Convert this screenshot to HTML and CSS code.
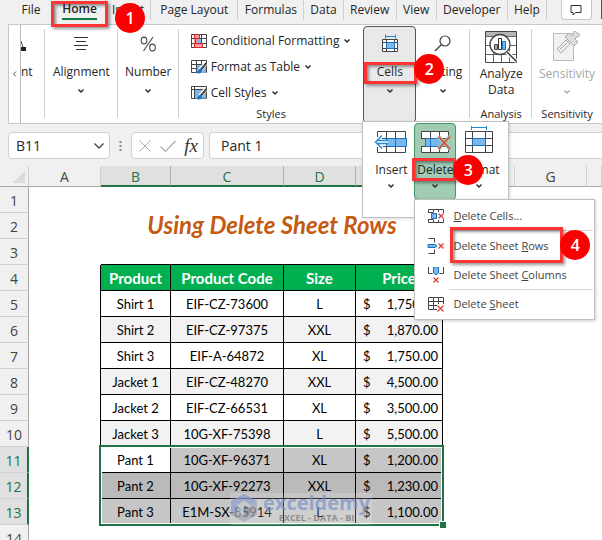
FILE: index.html
```html
<!DOCTYPE html>
<html lang="en">
<head>
  <meta charset="UTF-8" />
  <meta name="viewport" content="width=device-width, initial-scale=1.0" />
  <title>Using Delete Sheet Rows</title>
  <link rel="stylesheet" href="styles.css">
</head>
<body>
  <!-- shared chevron -->
  <svg class="defs" width="0" height="0">
    <symbol id="chev" viewBox="0 0 8 8"><path d="M1.5 2.5 4 5 6.5 2.5" fill="none" stroke="currentColor" stroke-width="1.4"/></symbol>
  </svg>

  <nav class="tabs">
    <button class="tab">File</button>
    <button class="tab active"><span>Home</span><i class="mark mark-home"></i><b class="badge badge-1">1</b></button>
    <button class="tab">Insert</button>
    <button class="tab">Page Layout</button>
    <button class="tab">Formulas</button>
    <button class="tab">Data</button>
    <button class="tab">Review</button>
    <button class="tab">View</button>
    <button class="tab">Developer</button>
    <button class="tab">Help</button>
    <div class="tab-end">
      <button class="comment" aria-label="Comments">
        <svg width="14" height="12" viewBox="0 0 14 12"><path d="M2 1.5h10v7H6.5L4 11V8.500H2z" fill="none" stroke="#333"/></svg>
      </button>
      <button class="share" aria-label="Share"></button>
    </div>
  </nav>

  <div class="ribbon">
    <button class="scroll" aria-label="Scroll left">
      <svg width="6" height="8" viewBox="0 0 6 8"><path d="M4 1.500 1.500 4 4 6.500" fill="none" stroke="#555"/></svg>
    </button>

    <div class="group cut">
      <svg class="icon" width="24" height="24" viewBox="0 0 24 24"><path d="M0 9l2 6" stroke="#444"/><path d="M0 15h5v4H0z" fill="#222"/></svg>
      <span class="label">nt</span>
    </div>

    <button class="group">
      <svg class="icon" width="24" height="24" viewBox="0 0 24 24"><path d="M5 5.500h14M7 9.500h10M5 13.500h14M7 17.500h10" stroke="#333"/></svg>
      <span class="label">Alignment</span>
      <svg class="chev"><use href="#chev"/></svg>
    </button>

    <button class="group">
      <svg class="icon" width="24" height="24" viewBox="0 0 24 24"><g fill="none" stroke="#444" stroke-width="1.100"><ellipse cx="8" cy="8.500" rx="2.800" ry="3.400"/><ellipse cx="16.500" cy="15.500" rx="2.800" ry="3.400"/><path d="M17 5 7.500 19"/></g></svg>
      <span class="label">Number</span>
      <svg class="chev"><use href="#chev"/></svg>
    </button>

    <div class="group styles">
      <button class="style-item">
        <svg width="16" height="14" viewBox="0 0 16 14"><path d="M.5.5h15v13H.5zM.5 4.500h15M.5 9.500h15M4.500.5v13M10.500.5v13" fill="#fff" stroke="#444"/><path d="M3.500.5h5v4h-5zM3.500 9.500h8v4h-8z" fill="#ff9c9c" stroke="#e02020"/><path d="M3.500 4.500h2v5h-2z" fill="#e02020"/><path d="M6 5h4v4H6z" fill="#7ab8ec"/></svg>
        Conditional Formatting <svg class="chev"><use href="#chev"/></svg>
      </button>
      <button class="style-item">
        <svg width="16" height="14" viewBox="0 0 16 14"><path d="M.5.5h15v12H.5zM.5 4.500h15M.5 8.500h15M5.500.5v12M10.500.5v12" fill="#fff" stroke="#444"/><path d="M6 5h9v8H6z" fill="#7ab8ec"/><path d="M15 3 9 10" stroke="#fff" stroke-width="4"/><path d="M15.500 3 10 9.500" stroke="#444" stroke-width="2"/><path d="M9.500 8.500c-2 .5-2 3-4.500 4 2.500 2 6 1 6-2z" fill="#1e72bd"/></svg>
        Format as Table <svg class="chev"><use href="#chev"/></svg>
      </button>
      <button class="style-item">
        <svg width="16" height="14" viewBox="0 0 16 14"><path d="M.5.5h15v12H.5zM.5 3.500h15M3.500.5v12" fill="#fff" stroke="#444"/><path d="M4 4h11v8.500H4z" fill="#7ab8ec"/><path d="M15 3 9 10" stroke="#fff" stroke-width="4"/><path d="M15.500 3 10 9.500" stroke="#444" stroke-width="2"/><path d="M9.500 8.500c-2 .5-2 3-4.500 4 2.500 2 6 1 6-2z" fill="#1e72bd"/></svg>
        Cell Styles <svg class="chev"><use href="#chev"/></svg>
      </button>
      <span class="caption">Styles</span>
    </div>

    <div class="group-wrap">
      <button class="group open">
        <svg class="icon" width="24" height="24" viewBox="0 0 24 24"><path d="M4.500 7.500h15v12h-15zM4.500 10.500h15M4.500 16.500h15M8.500 7.500v12M16.500 7.500v12" fill="#fff" stroke="#444"/><path d="M8.500 10.500h8v6h-8z" fill="#7ab8ec" stroke="#1e72bd"/><path d="M8 4.500h9M7.500 2.500v4M17.500 2.500v4" stroke="#1e8ad6"/></svg>
        <span class="label">Cells</span>
        <svg class="chev"><use href="#chev"/></svg>
        <i class="mark mark-cells"></i><b class="badge badge-2">2</b>
      </button>

      <div class="popup">
        <button class="cmd">
          <svg width="34" height="30" viewBox="0 0 34 30"><path d="M3.500 5.500h28v21h-28zM3.500 12.500h28M3.500 20.500h28M12.500 5.500v21M21.500 5.500v21" fill="#fff" stroke="#444"/><path d="M12.500 12.500h20v8h-20z" fill="#7ab8ec" stroke="#1e72bd"/><path d="M21.500 12.500v8" stroke="#1e72bd"/><path d="M8 9.500 1.500 16 8 22.500M1.500 16H14" fill="none" stroke="#fff" stroke-width="4"/><path d="M8 9.500 1.500 16 8 22.500M3 14.500h11M3 17.500h11" fill="none" stroke="#1e8ad6" stroke-width="1.400"/></svg>
          <span>Insert</span>
          <svg class="chev"><use href="#chev"/></svg>
        </button>
        <button class="cmd on">
          <svg width="34" height="30" viewBox="0 0 34 30"><path d="M3.500 5.500h27v21h-27zM3.500 12.500h27M3.500 20.500h27M12.500 5.500v21M21.500 5.500v21" fill="#fff" stroke="#444"/><path d="M1 13h6v7H1zM26 13h6v7h-6z" fill="#9fccb3"/><path d="M7.500 12.500h14l4 4-4 4h-14z" fill="#7ab8ec" stroke="#1e72bd"/><path d="M12.500 12.500v8" stroke="#1e72bd"/><path d="M20.500 10.500 32 23M32 10.500 20.500 23" stroke="#9fccb3" stroke-width="4"/><path d="M20.500 10.500 32 23M32 10.500 20.500 23" stroke="#e04434" stroke-width="1.600"/></svg>
          <span>Delete</span>
          <svg class="chev"><use href="#chev"/></svg>
          <i class="mark mark-delete"></i><b class="badge badge-3">3</b>
        </button>
        <button class="cmd">
          <svg width="34" height="30" viewBox="0 0 34 30"><path d="M3.500 5.500h27v21h-27zM3.500 12.500h27M3.500 19.500h27M10.500 5.500v21M23.500 5.500v21" fill="#fff" stroke="#444"/><path d="M10.500 12.500h13v7h-13z" fill="#7ab8ec" stroke="#1e72bd"/><path d="M9.500 1.500h15M9.500 0v4M24.500 0v4" stroke="#1e8ad6"/></svg>
          <span>Format</span>
          <svg class="chev"><use href="#chev"/></svg>
        </button>

        <div class="menu">
          <button class="menu-item">
            <svg width="18" height="16" viewBox="0 0 18 16"><path d="M1.500 5V1.500h15V5M6.500 1.500V4M11.500 1.500V4M1.500 11v3.500h15V11M6.500 14.500V12M11.500 14.500V12M1.500 4.500h5M1.500 11.500h5" fill="none" stroke="#444"/><path d="M4.500 5.500h5v5h-5z" fill="#7ab8ec" stroke="#1e72bd"/><path d="m11.500 5.500 5 5m0-5-5 5" stroke="#e04434" stroke-width="1.400"/></svg>
            <span><u>D</u>elete Cells...</span>
          </button>
          <button class="menu-item rows">
            <svg width="18" height="16" viewBox="0 0 18 16"><path d="M1.500.5h6v4M1.500 15.500h6v-4" fill="none" stroke="#444"/><path d="M1 6.500h7l2 1.500-2 1.500H1z" fill="#7ab8ec" stroke="#1e72bd"/><path d="m11.500 5.500 5 5m0-5-5 5" stroke="#e04434" stroke-width="1.400"/></svg>
            <span>Delete Sheet <u>R</u>ows</span>
            <i class="mark mark-rows"></i><b class="badge badge-4">4</b>
          </button>
          <button class="menu-item columns">
            <svg width="18" height="16" viewBox="0 0 18 16"><path d="M1.500 0v6.500h4M16.500 0v6.500h-4" fill="none" stroke="#444"/><path d="M6.500 0v6L9 8l2.500-2V0z" fill="#7ab8ec" stroke="#1e72bd"/><path d="m6.500 10.500 5 5m0-5-5 5" stroke="#e04434" stroke-width="1.400"/></svg>
            <span>Delete Sheet <u>C</u>olumns</span>
          </button>
          <button class="menu-item last">
            <svg width="18" height="16" viewBox="0 0 18 16"><path d="M10 13.500H1.500V1.500h15V8M1.500 5.500h15M1.500 9.500H10M6.500 1.500v12M11.500 1.500V8" fill="none" stroke="#444"/><path d="m10.500 9.500 6 6m0-6-6 6" stroke="#e04434" stroke-width="1.400"/></svg>
            <span>Delete <u>S</u>heet</span>
          </button>
        </div>
      </div>
    </div>

    <button class="group">
      <svg class="icon" width="24" height="24" viewBox="0 0 24 24"><circle cx="14" cy="9" r="5" fill="none" stroke="#444" stroke-width="1.200"/><path d="M10.500 12.500 4 19" stroke="#444" stroke-width="1.400"/></svg>
      <span class="label">Editing</span>
      <svg class="chev"><use href="#chev"/></svg>
    </button>

    <button class="group big">
      <svg width="32" height="32" viewBox="0 0 32 32"><path d="M.5.5h31v31H.5z" fill="#fff" stroke="#444"/><path d="M1 1h30v4H1z" fill="#b5b5b5"/><path d="M.5 5.500h31M.5 14.500h31M.5 23.500h31M8.500 14v17M16.500 5v26M24.500 14v17" stroke="#666"/><circle cx="15" cy="13.500" r="10" fill="#fff" stroke="#444" stroke-width="1.300"/><path d="M9.500 13.500h3v5h-3z" fill="#aaa" stroke="#444"/><path d="M13.500 7.500h3v11h-3z" fill="#fff" stroke="#333"/><path d="M17.500 10.500h3v8h-3z" fill="#7ab8ec" stroke="#1e72bd"/><path d="m22 21 9.500 9.500" stroke="#fff" stroke-width="4"/><path d="m22 21 9.500 9.500" stroke="#333" stroke-width="1.500"/></svg>
      <span class="label">Analyze<br>Data</span>
      <span class="caption">Analysis</span>
    </button>

    <button class="group big disabled" disabled>
      <svg width="32" height="32" viewBox="0 0 32 32"><path d="M2.500 2.500h20v27h-20z" fill="#f1f1f1" stroke="#bbb"/><path d="m6 18 9-9 4 4-9 9z" fill="#eee" stroke="#aaa"/><path d="m9 18 7-6" stroke="#aaa"/><path d="m14 6 4-4 3 3c2-1 0-4 3-5l5 4c-1 3-5 1-5 4l3 3-4 4z" fill="#ddd" stroke="#aaa"/></svg>
      <span class="label">Sensitivity</span>
      <svg class="chev"><use href="#chev"/></svg>
      <span class="caption">Sensitivity</span>
    </button>
  </div>

  <div class="formula-bar">
    <button class="name-box" aria-label="Name box">B11
      <svg width="12" height="8" viewBox="0 0 12 8"><path d="m1.500 1.500 4.500 4.500 4.500-4.500" fill="none" stroke="#444" stroke-width="1.300"/></svg>
    </button>
    <svg class="dots" width="3" height="12" viewBox="0 0 3 12"><path d="M.5 1h2v2h-2zM.5 5h2v2h-2zM.5 9h2v2h-2z" fill="#888"/></svg>
    <div class="fx-box">
      <button aria-label="Cancel"><svg width="14" height="14" viewBox="0 0 14 14"><path d="m1.500 1.500 11 11m0-11-11 11" stroke="#aaa"/></svg></button>
      <button aria-label="Enter"><svg width="18" height="14" viewBox="0 0 18 14"><path d="m1.500 7.500 5 5 10-10.500" fill="none" stroke="#aaa" stroke-width="1.200"/></svg></button>
      <button class="fx">fx</button>
    </div>
    <input class="formula" type="text" value="Pant 1" aria-label="Formula">
  </div>

  <main class="sheet">
    <table>
      <colgroup><col class="c-head"><col class="c-std"><col class="c-b"><col class="c-c"><col class="c-std"><col class="c-e"><col class="c-std"><col class="c-std"><col></colgroup>
      <thead>
        <tr><th class="corner"></th><th>A</th><th class="sel">B</th><th class="sel">C</th><th class="sel">D</th><th class="sel">E</th><th>F</th><th>G</th><th></th></tr>
      </thead>
      <tbody id="rows"></tbody>
    </table>
  </main>

  <script>
    const products = [
      ["Shirt 1", "EIF-CZ-73600", "L", "1,750.00"],
      ["Shirt 2", "EIF-CZ-97375", "XXL", "1,870.00"],
      ["Shirt 3", "EIF-A-64872", "XL", "1,750.00"],
      ["Jacket 1", "EIF-CZ-48270", "XXL", "4,500.00"],
      ["Jacket 2", "EIF-CZ-66531", "XL", "3,500.00"],
      ["Jacket 3", "10G-XF-75398", "L", "5,500.00"],
      ["Pant 1", "10G-XF-96371", "XL", "1,200.00"],
      ["Pant 2", "10G-XF-92273", "XXL", "1,230.00"],
      ["Pant 3", "E1M-SX-85914", "L", "1,100.00"]
    ];

    const selection = `<div class="selection"><i class="handle"></i></div>`;
    const watermark = `
      <div class="watermark">
        <svg width="28" height="30" viewBox="0 0 28 30"><path d="M14 1 27 8v14l-13 7L1 22V8z" fill="#a4abbb"/><path d="M14 1 1 8v14l6-4v-7l7-4 7 4 6-3z" fill="#8d9fd0"/><path d="m14 8 6 4v8l-6 3-6-3v-8z" fill="#c9ccd4"/><path d="M14 12l6 3v5l-6 3z" fill="#7f8694"/></svg>
        <div><b>exceldemy</b><small>EXCEL - DATA - BI</small></div>
      </div>`;

    const rows = document.getElementById("rows");
    let html = "";
    for (let n = 1; n <= 14; n++) {
      const p = products[n - 5];
      const picked = n >= 11 && n <= 13;
      let cells = "<td></td>".repeat(5);
      if (n === 2) {
        cells = `<td></td><td class="title" colspan="4">Using Delete Sheet Rows</td>`;
      } else if (n === 3) {
        cells = "<td></td>" + `<td class="line"></td>`.repeat(4);
      } else if (n === 4) {
        cells = `<td class="edge"></td><td class="cell head">Product</td><td class="cell head">Product Code</td><td class="cell head">Size</td><td class="cell head">Price</td>`;
      } else if (p) {
        cells = `<td class="edge"></td>
          <td class="cell ${n === 11 ? "current" : ""}">${p[0]}${n === 11 ? selection : ""}</td>
          <td class="cell">${p[1]}</td>
          <td class="cell">${p[2]}${n === 13 ? watermark : ""}</td>
          <td class="cell"><div class="money"><span>$</span><span>${p[3]}</span></div></td>`;
      }
      html += `<tr class="${p && n % 2 === 0 ? "band" : ""} ${picked ? "picked" : ""}"><th>${n}</th>${cells}<td></td><td></td><td></td></tr>`;
    }
    rows.innerHTML = html;
  </script>
</body>
</html>
```
FILE: styles.css
```css
* {
  box-sizing: border-box;
}
body {
  margin: 0;
  height: 100vh;
  overflow: hidden;
  display: flex;
  flex-direction: column;
  background: #f0f0f0;
  color: #262626;
  font-family: "Open Sans", "Noto Sans", sans-serif;
  font-size: 12px;
  line-height: 16px;
}
button {
  font: inherit;
  color: inherit;
  background: none;
  border: 0;
  padding: 0;
  white-space: nowrap;
}
svg {
  display: block;
  flex: none;
}
.defs {
  position: absolute;
}
.chev {
  width: 8px;
  height: 8px;
}

/* tabs */
.tabs {
  display: grid;
  grid-template-columns: 46fr 52fr 45fr 87fr 66fr 39fr 53fr 40fr 71fr 39fr 55fr;
  height: 24px;
  padding-left: 8px;
}
.tab {
  position: relative;
  height: 20px;
  border-right: 1px solid #cfcfcf;
}
.tab:first-child {
  border-right: 0;
}
.tab.active span {
  display: inline-block;
  border-bottom: 2px solid #107c41;
  font-weight: 600;
  height: 20px;
  line-height: 18px;
}
.tab-end {
  display: flex;
  justify-content: space-between;
  padding-left: 14px;
}
.comment {
  display: flex;
  justify-content: center;
  align-items: center;
  width: 31px;
  height: 20px;
  background: #fff;
  border: 1px solid #c8c8c8;
  border-top: 0;
  border-radius: 0 0 4px 4px;
}
.share {
  width: 1px;
  height: 19px;
  background: #107c41;
}

/* callouts */
.mark {
  position: absolute;
  border: 3px solid #fb3434;
  box-shadow: 2px 2px 3px rgba(0, 0, 0, 0.4), inset 2px 2px 3px rgba(0, 0, 0, 0.4);
  z-index: 5;
}
.badge {
  position: absolute;
  width: 30px;
  height: 30px;
  border-radius: 50%;
  background: #fb0000;
  color: #fff;
  font-size: 16px;
  font-weight: 600;
  line-height: 30px;
  text-align: center;
  z-index: 6;
}
.mark-home {
  inset: 1px -3px -7px -3px;
}
.badge-1 {
  left: 61px;
  top: 3px;
}
.mark-cells {
  inset: 35px -2px 38px 0;
}
.badge-2 {
  left: 50px;
  top: 27px;
}
.mark-delete {
  inset: 34px -1px 18px -3px;
}
.badge-3 {
  left: 38px;
  top: 31px;
}
.mark-rows {
  inset: -3px 30px -2px 34px;
}
.badge-4 {
  right: 3px;
  top: 0;
}

/* ribbon */
.ribbon {
  display: grid;
  grid-template-columns: 12px 24fr 73fr 61fr 185fr 53fr 54fr 62fr 70fr;
  height: 100px;
  margin-left: 8px;
  background: #fff;
  border: 1px solid #c8c8c8;
  border-right: 0;
}
.scroll {
  display: flex;
  justify-content: center;
  align-items: center;
  border-right: 1px solid #b8b8b8;
}
.group {
  position: relative;
  display: flex;
  flex-direction: column;
  align-items: center;
  padding-top: 7px;
  min-width: 0;
}
.group::after {
  content: "";
  position: absolute;
  right: 0;
  top: 4px;
  bottom: 5px;
  border-right: 1px solid #d0d0d0;
}
.group .icon + .label {
  margin: 8px 0 7px;
}
.cut {
  align-items: flex-start;
}
.styles {
  align-items: flex-start;
  padding: 8px 0 0 12px;
}
.styles::after,
.open::after,
.disabled::after {
  display: none;
}
.style-item {
  display: flex;
  align-items: center;
  gap: 4px;
  height: 26px;
  line-height: 16px;
  padding-bottom: 10px;
}
.caption {
  position: absolute;
  left: 0;
  right: 0;
  bottom: 1px;
  font-size: 11px;
  text-align: center;
}
.group-wrap {
  position: relative;
}
.open {
  width: 100%;
  height: 97px;
  margin-top: 1px;
  padding-top: 5px;
  background: #e9e9e9;
  border: 1px solid #555;
  border-radius: 4px;
}
.big {
  padding-top: 6px;
}
.big .label {
  margin: 3px 0 6px;
}
.disabled {
  color: #a6a6a6;
}
.disabled .caption {
  color: #262626;
}

/* cells drop-down */
.popup {
  position: absolute;
  left: -1px;
  top: 96px;
  display: flex;
  width: 147px;
  height: 97px;
  padding: 1px 1px 17px 7px;
  background: #fff;
  border: 1px solid #c0c0c0;
  box-shadow: 1px 1px 3px rgba(0, 0, 0, 0.15);
  z-index: 3;
}
.cmd {
  position: relative;
  display: flex;
  flex-direction: column;
  align-items: center;
  width: 42px;
  margin-right: 2px;
  padding-top: 2px;
  border: 1px solid transparent;
}
.cmd span {
  margin: 6px 0 4px;
}
.cmd.on {
  background: #9fccb3;
  border-color: #4c9468;
  border-radius: 4px;
}
.menu {
  position: absolute;
  left: 51px;
  top: 77px;
  width: 181px;
  padding: 1px;
  background: #fff;
  border: 1px solid #c0c0c0;
  box-shadow: 1px 1px 3px rgba(0, 0, 0, 0.2);
}
.menu-item {
  position: relative;
  display: flex;
  align-items: center;
  gap: 8px;
  width: 100%;
  height: 29px;
  padding-left: 11px;
  color: #444;
  font-size: 11px;
}
.menu .rows {
  height: 31px;
}
.menu .columns {
  height: 28px;
}
.menu .rows::before,
.menu .last::before {
  content: "";
  position: absolute;
  left: 33px;
  right: 0;
  top: 0;
  border-top: 1px solid #d8d8d8;
}

/* formula bar */
.formula-bar {
  display: flex;
  height: 42px;
  padding: 8px 0 7px 8px;
  font-size: 14px;
}
.name-box,
.fx-box,
.formula {
  background: #fff;
  border: 1px solid #d0d0d0;
  border-radius: 4px;
}
.name-box {
  display: flex;
  justify-content: space-between;
  align-items: center;
  width: 102px;
  padding: 0 4px 0 7px;
}
.dots {
  align-self: center;
  margin: 0 9px;
}
.fx-box {
  display: flex;
  justify-content: space-between;
  align-items: center;
  width: 73px;
  padding: 0 5px 0 6px;
  margin-right: 5px;
}
.fx {
  font: italic 19px/20px "Liberation Serif", serif;
  color: #333;
}
.formula {
  flex: 1;
  min-width: 0;
  padding: 0 11px;
  border-right: 0;
  border-radius: 4px 0 0 4px;
  font: inherit;
  color: #262626;
}

/* sheet */
.sheet {
  flex: 1;
  overflow: hidden;
}
table {
  width: 100%;
  table-layout: fixed;
  border-collapse: separate;
  border-spacing: 0;
  font-family: Lato, sans-serif;
  font-size: 13px;
  color: #000;
}
.c-head {
  width: 29px;
}
.c-std {
  width: 72px;
}
.c-b {
  width: 70px;
}
.c-c {
  width: 113px;
}
.c-e {
  width: 87px;
}
td,
th {
  height: 26px;
  padding: 0;
  background: #fff;
}
th {
  padding-top: 2px;
  background: #f0f0f0;
  border-right: 1px solid #a6a6a6;
  border-bottom: 1px solid #d0d0d0;
  color: #444;
  font-family: "Open Sans", sans-serif;
  font-size: 14px;
  font-weight: 400;
}
thead th {
  height: 21px;
  border-right-color: #d0d0d0;
  border-bottom-color: #a6a6a6;
}
thead .corner {
  background: linear-gradient(135deg, transparent 50%, #dcdcdc 50%) 12px 4px / 13px 13px no-repeat #f0f0f0;
}
thead .sel {
  background: #e0e0e0;
  border-right-color: #b0b0b0;
  border-bottom: 2px solid #217346;
  color: #217346;
}
.picked th {
  background: #e0e0e0;
  border-right: 2px solid #217346;
  color: #217346;
}
.title {
  padding-bottom: 2px;
  color: #c55a11;
  font-size: 24px;
  font-style: italic;
  font-weight: 700;
  line-height: 20px;
  text-align: center;
}
.line {
  border-bottom: 1px solid #000;
}
.edge {
  border-right: 1px solid #000;
}
.cell {
  position: relative;
  border-right: 1px solid #000;
  border-bottom: 1px solid #000;
  line-height: 18px;
  text-align: center;
}
.head {
  background: #00b050;
  color: #fff;
  font-size: 15px;
  font-weight: 700;
}
.band .cell {
  background: #f2f2f2;
}
.picked .cell {
  background: #c6c6c6;
}
.picked.band .cell {
  background: #bababa;
}
.picked .current {
  background: #fff;
}
.money {
  display: flex;
  justify-content: space-between;
  padding: 0 4px 0 7px;
}
.selection {
  position: absolute;
  left: -2px;
  top: -2px;
  width: 345px;
  height: 81px;
  border: 2px solid #217346;
  box-shadow: inset 0 0 0 1px #fff;
  z-index: 1;
}
.handle {
  position: absolute;
  right: -4px;
  bottom: -4px;
  width: 6px;
  height: 6px;
  background: #217346;
  box-shadow: 0 0 0 1px #fff;
}
.watermark {
  position: absolute;
  left: -54px;
  top: -6px;
  display: flex;
  gap: 5px;
  width: 142px;
  height: 32px;
  background: rgba(255, 255, 255, 0.25);
  font-family: "Open Sans", sans-serif;
  text-align: left;
  opacity: 0.7;
  z-index: 2;
}
.watermark b {
  display: block;
  color: #8296cf;
  font-size: 20px;
  line-height: 20px;
}
.watermark small {
  display: block;
  color: #777;
  font-size: 9px;
  font-weight: 700;
  line-height: 10px;
  text-align: center;
}
```
